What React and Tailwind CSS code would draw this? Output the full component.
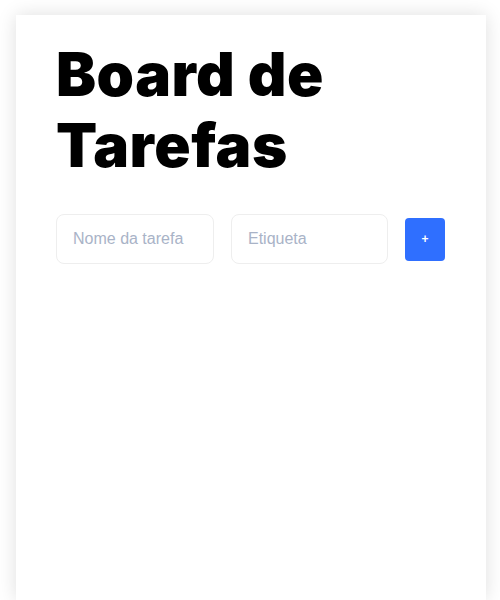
export default function App() {
  return (
    <div className="min-h-[600px] bg-white pt-[15px] pl-4 pr-[14px]" style={{ fontFamily: '"Liberation Sans", Arial, sans-serif' }}>
      <div className="min-h-[585px] bg-white shadow-[0_0_18px_rgba(0,0,0,0.13)] px-10 pt-[24px]">
        <h1
          className="text-[60px] leading-[71px] font-black text-black tracking-[0.5px]"
          style={{ fontFamily: 'Inter, "Liberation Sans", sans-serif' }}
        >
          Board de<br />Tarefas
        </h1>
        <div className="flex items-center gap-[17px] mt-[33px]">
          <input
            type="text"
            placeholder="Nome da tarefa"
            className="w-[158px] h-[50px] border border-[#eeeeee] rounded-lg px-4 text-base text-gray-700 placeholder:text-[#a9b3c7] outline-none"
          />
          <input
            type="text"
            placeholder="Etiqueta"
            className="w-[157px] h-[50px] border border-[#eeeeee] rounded-lg px-4 text-base text-gray-700 placeholder:text-[#a9b3c7] outline-none"
          />
          <button className="w-10 h-[43px] bg-[#2f6fff] rounded text-white text-xs font-bold">
            +
          </button>
        </div>
      </div>
    </div>
  );
}
